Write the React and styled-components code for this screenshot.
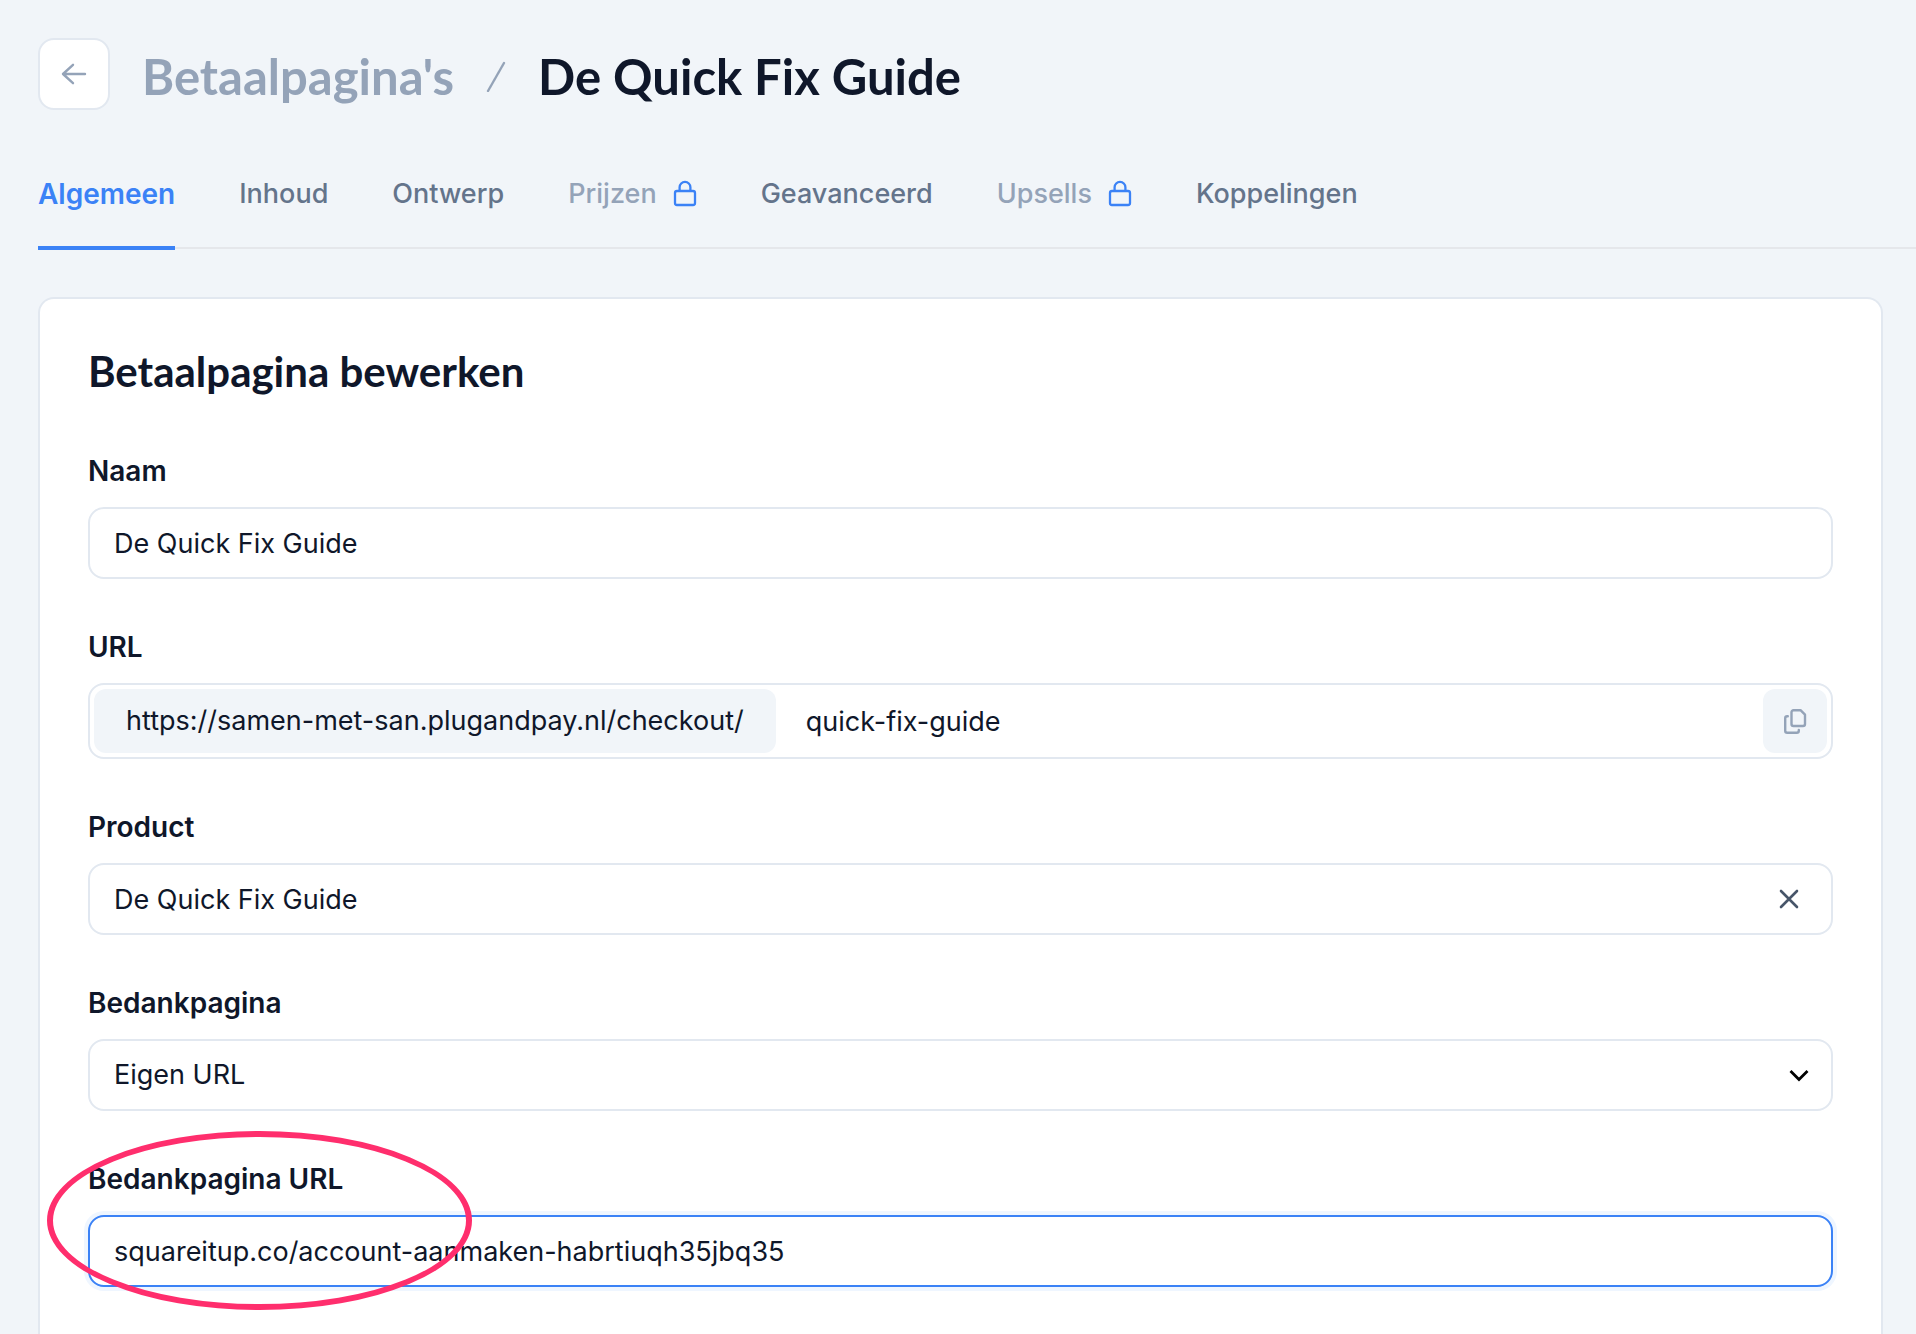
import React, { useState } from 'react';
import styled, { createGlobalStyle } from 'styled-components';

const TABS = [
  { label: 'Algemeen', active: true },
  { label: 'Inhoud' },
  { label: 'Ontwerp' },
  { label: 'Prijzen', locked: true },
  { label: 'Geavanceerd' },
  { label: 'Upsells', locked: true },
  { label: 'Koppelingen' },
];

const LockIcon = () => (
  <svg width="24" height="28" viewBox="0 0 24 28" fill="none" stroke="#3b82f6" strokeWidth="2.3" aria-hidden="true">
    <rect x="2" y="11" width="20" height="14" rx="2" />
    <path d="M6.600 11V7.300a5.400 5.400 0 0 1 10.800 0V11" />
  </svg>
);

const App = () => {
  const [name, setName] = useState('De Quick Fix Guide');
  const [slug, setSlug] = useState('quick-fix-guide');
  const [product, setProduct] = useState('De Quick Fix Guide');
  const [thanksUrl, setThanksUrl] = useState(
    'squareitup.co/account-aanmaken-habrtiuqh35jbq35'
  );

  return (
    <Page>
      <GlobalStyle />
      <Header>
        <BackButton type="button" aria-label="Terug">
          <svg width="28" height="28" viewBox="0 0 28 28" fill="none" stroke="#94a3b8" strokeWidth="2.4" strokeLinecap="round" strokeLinejoin="round">
            <path d="M25 14H3M13 4.800L3 14l10 9.200" />
          </svg>
        </BackButton>
        <Breadcrumb>
          <ParentLink href="#betaalpaginas">Betaalpagina's</ParentLink>
          <svg width="20" height="32" viewBox="0 0 20 32" fill="none" stroke="#94a3b8" strokeWidth="2.4" strokeLinecap="round" aria-hidden="true">
            <path d="M2 31L18 3" />
          </svg>
          <PageTitle>De Quick Fix Guide</PageTitle>
        </Breadcrumb>
      </Header>

      <Tabs>
        {TABS.map(({ label, active, locked }) => (
          <Tab
            key={label}
            href={`#${label.toLowerCase()}`}
            $active={active}
            $locked={locked}
          >
            {label}
            {locked && <LockIcon />}
          </Tab>
        ))}
      </Tabs>

      <Card>
        <CardTitle>Betaalpagina bewerken</CardTitle>
        <Form>
          <Field>
            <Label htmlFor="name">Naam</Label>
            <Control>
              <Input id="name" value={name} onChange={e => setName(e.target.value)} />
            </Control>
          </Field>

          <Field>
            <Label htmlFor="slug">URL</Label>
            <UrlControl>
              <UrlPrefix>https://samen-met-san.plugandpay.nl/checkout/</UrlPrefix>
              <Input id="slug" value={slug} onChange={e => setSlug(e.target.value)} />
              <CopyButton type="button" aria-label="Kopieer URL">
                <svg width="24" height="28" viewBox="0 0 24 28" fill="none" stroke="#94a3b8" strokeWidth="2.4" strokeLinecap="round" strokeLinejoin="round">
                  <path d="M10.500 3.200h7L22 7.700V17a2 2 0 0 1-2 2h-9.500a2 2 0 0 1-2-2V5.200a2 2 0 0 1 2-2z" />
                  <path d="M4.800 9.200H4.200a2 2 0 0 0-2 2V23.700a2 2 0 0 0 2 2h9.600a2 2 0 0 0 2-2v-.8" />
                </svg>
              </CopyButton>
            </UrlControl>
          </Field>

          <Field>
            <Label htmlFor="product">Product</Label>
            <Control>
              <Input id="product" value={product} onChange={e => setProduct(e.target.value)} />
              <ClearButton type="button" aria-label="Wis product" onClick={() => setProduct('')}>
                <svg width="20" height="20" viewBox="0 0 20 20" fill="none" stroke="#475569" strokeWidth="2.600" strokeLinecap="round">
                  <path d="M2 2l16 16M18 2L2 18" />
                </svg>
              </ClearButton>
            </Control>
          </Field>

          <Field>
            <Label htmlFor="thanks">Bedankpagina</Label>
            <Control>
              <Select id="thanks" defaultValue="url">
                <option value="url">Eigen URL</option>
              </Select>
              <Chevron width="20" height="14" viewBox="0 0 20 14" fill="none" stroke="#000" strokeWidth="2.800" aria-hidden="true">
                <path d="M1.500 3l8.500 8.500L18.500 3" />
              </Chevron>
            </Control>
          </Field>

          <Field>
            <Label htmlFor="thanks-url">Bedankpagina URL</Label>
            <Control $focused>
              <Input id="thanks-url" value={thanksUrl} onChange={e => setThanksUrl(e.target.value)} />
            </Control>
            <Marker />
          </Field>
        </Form>
      </Card>
    </Page>
  );
};

export default App;

const GlobalStyle = createGlobalStyle`
  * {
    box-sizing: border-box;
  }

  body {
    margin: 0;
    background: #f1f5f9;
    color: #0f172a;
    font-family: Inter, 'Liberation Sans', sans-serif;
    font-size: 27px;
    line-height: 40px;
  }

  input, select, button {
    color: inherit;
    font: inherit;
  }
`;

const Page = styled.div`
  display: flex;
  flex-direction: column;
  min-height: 100vh;
  padding-left: 38px;
`;

const Header = styled.header`
  display: flex;
  align-items: center;
  gap: 32px;
  padding-top: 38px;
`;

const BackButton = styled.button`
  display: flex;
  align-items: center;
  justify-content: center;
  width: 72px;
  height: 72px;
  padding: 0;
  border: 2px solid #e2e8f0;
  border-radius: 16px;
  background: white;
`;

const Breadcrumb = styled.nav`
  display: flex;
  align-items: center;
  gap: 32px;
  padding-top: 4px;
  font-family: Lato, sans-serif;
  font-size: 49px;
  font-weight: 700;
  line-height: 56px;
`;

const ParentLink = styled.a`
  color: #94a3b8;
  text-decoration: none;
`;

const PageTitle = styled.h1`
  margin: 0;
  font: inherit;
`;

const Tabs = styled.nav`
  display: flex;
  gap: 64px;
  margin-top: 64px;
  box-shadow: inset 0 -1px #f1f5f9, inset 0 -3px #e5e7eb;
`;

const Tab = styled.a`
  display: flex;
  align-items: center;
  gap: 16px;
  padding-bottom: 32px;
  border-bottom: 4px solid ${props => (props.$active ? '#3b82f6' : 'transparent')};
  color: ${props =>
    props.$active ? '#3b82f6' : props.$locked ? '#94a3b8' : '#64748b'};
  font-size: ${props => (props.$active ? '28px' : '27px')};
  font-weight: ${props => (props.$active ? 600 : 500)};
  text-decoration: none;
`;

const Card = styled.main`
  flex: 1;
  margin: 47px 33px 0 0;
  padding: 48px 48px 40px;
  border: 2px solid #e2e8f0;
  border-bottom: 0;
  border-radius: 16px 16px 0 0;
  background: white;
`;

const CardTitle = styled.h2`
  margin: 0 0 56px;
  font-family: Lato, sans-serif;
  font-size: 42px;
  font-weight: 700;
  line-height: 48px;
`;

const Form = styled.form`
  display: flex;
  flex-direction: column;
  gap: 48px;
`;

const Field = styled.div`
  display: flex;
  position: relative;
  flex-direction: column;
  gap: 16px;
`;

const Label = styled.label`
  font-size: 28px;
  font-weight: 600;
`;

const Control = styled.div`
  display: flex;
  position: relative;
  align-items: center;
  height: 72px;
  border: 2px solid ${props => (props.$focused ? '#3b82f6' : '#e2e8f0')};
  border-radius: 16px;
  background: white;
  box-shadow: ${props => (props.$focused ? '0 0 0 4px #eff6ff' : 'none')};
`;

const UrlControl = styled(Control)`
  gap: 6px;
  height: 76px;
  padding: 4px;
`;

const Input = styled.input`
  flex: 1;
  min-width: 0;
  height: 100%;
  padding: 0 24px;
  border: 0;
  border-radius: 14px;
  outline: 0;
  background: transparent;
`;

const UrlPrefix = styled.span`
  padding: 12px 32px;
  border-radius: 12px;
  background: #f1f5f9;
`;

const CopyButton = styled.button`
  display: flex;
  align-items: center;
  justify-content: center;
  width: 64px;
  height: 64px;
  padding: 0;
  border: 0;
  border-radius: 12px;
  background: #f1f5f9;
`;

const ClearButton = styled.button`
  display: flex;
  margin-right: 32px;
  padding: 0;
  border: 0;
  background: none;
`;

const Select = styled.select`
  width: 100%;
  height: 100%;
  padding: 0 24px;
  border: 0;
  border-radius: 14px;
  outline: 0;
  appearance: none;
  background: transparent;
`;

const Chevron = styled.svg`
  position: absolute;
  right: 22px;
  pointer-events: none;
`;

/* highlight around the thank-you URL */
const Marker = styled.span`
  position: absolute;
  top: -28px;
  left: -41px;
  width: 425px;
  height: 179px;
  border: 6px solid #ff2e6d;
  border-radius: 50%;
  pointer-events: none;
`;
